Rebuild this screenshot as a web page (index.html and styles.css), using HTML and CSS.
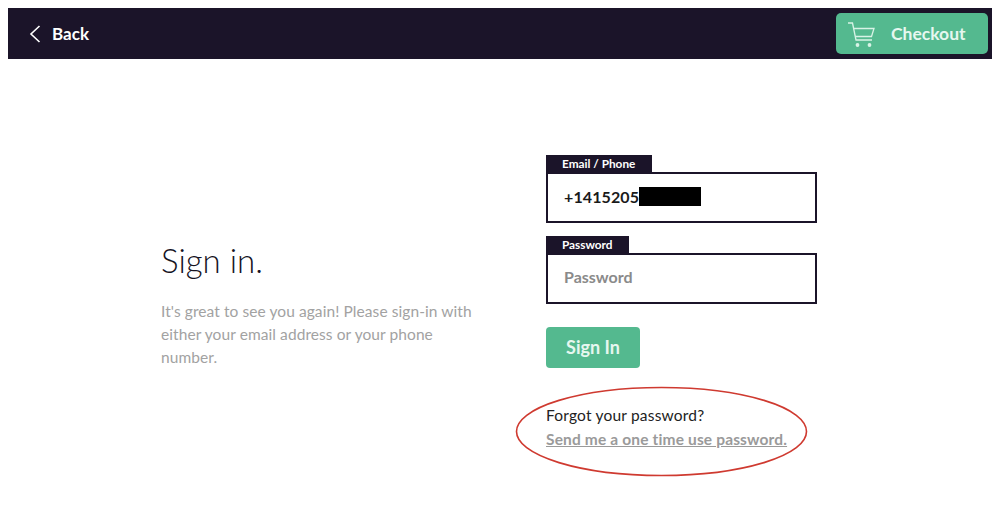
FILE: index.html
```html
<!DOCTYPE html>
<html lang="en">
<head>
  <meta charset="UTF-8" />
  <title>Sign in</title>
  <link rel="stylesheet" href="styles.css">
</head>
<body>
  <div class="page">
    <div class="header">
      <a class="back-link">
        <svg class="back-icon" width="12" height="18" viewBox="0 0 12 18">
          <path d="M10.5 1 L2 9 L10.5 17" fill="none" stroke="#fff" stroke-width="1.6"/>
        </svg>
        Back
      </a>
      <a class="checkout-btn">
        <svg class="cart-icon" width="28" height="28" viewBox="0 0 28 28">
          <path d="M1 3 H5.5 L9 20 H25" fill="none" stroke="#d8f3e6" stroke-width="1.3"/>
          <path d="M6.5 8.5 H27 L24.5 16.5 H8.2" fill="none" stroke="#d8f3e6" stroke-width="1.3"/>
          <circle cx="10.5" cy="25" r="1.9" fill="#d8f3e6"/>
          <circle cx="22.5" cy="25" r="1.9" fill="#d8f3e6"/>
        </svg>
        Checkout
      </a>
    </div>

    <div class="content">
      <div class="intro">
        <h1>Sign in.</h1>
        <p>It's great to see you again! Please sign-in with either your email address or your phone number.</p>
      </div>

      <div class="signin-form">
        <div class="form-group">
          <div class="field-tab tab-email">Email / Phone</div>
          <div class="field-box"><span class="field-value">+1415205</span><span class="redacted"></span></div>
        </div>
        <div class="form-group">
          <div class="field-tab tab-password">Password</div>
          <div class="field-box"><span class="field-placeholder">Password</span></div>
        </div>
        <button class="signin-btn">Sign In</button>
        <div class="forgot">
          <p>Forgot your password?</p>
          <a class="otp-link">Send me a one time use password.</a>
          <svg class="annotation" width="295" height="93" viewBox="0 0 295 93">
            <ellipse cx="146.5" cy="46.5" rx="145" ry="44" fill="none" stroke="#cf3a30" stroke-width="1.6"/>
          </svg>
        </div>
      </div>
    </div>
  </div>
</body>
</html>
```

FILE: styles.css
```css
body {
  margin: 8px;
  background: #fff;
  font-family: 'Lato', sans-serif;
  color: #1a1a1a;
}

.page {
  width: 984px;
}

.header {
  display: flex;
  justify-content: space-between;
  align-items: center;
  height: 51px;
  padding: 0 4px 0 21px;
  box-sizing: border-box;
  background: #1b1429;
}

.back-link {
  display: flex;
  align-items: center;
  gap: 11px;
  color: #fff;
  font-size: 17px;
  font-weight: 700;
}

.checkout-btn {
  display: flex;
  align-items: center;
  gap: 16px;
  width: 152px;
  height: 41px;
  padding-left: 11px;
  box-sizing: border-box;
  background: #54b98f;
  border-radius: 5px;
  color: #e6f7ef;
  font-size: 17.5px;
  font-weight: 700;
}

.content {
  display: flex;
  padding: 96px 0 0 153px;
}

.intro {
  width: 385px;
  padding-top: 84px;
  box-sizing: border-box;
}

.intro h1 {
  margin: 0 0 19px;
  font-size: 33px;
  font-weight: 300;
  line-height: 42px;
  color: #16131f;
}

.intro p {
  width: 320px;
  margin: 0;
  font-size: 15.5px;
  line-height: 23px;
  color: #a2a2a2;
  letter-spacing: 0.08px;
}

.signin-form {
  width: 271px;
}

.form-group {
  margin-bottom: 13px;
}

.field-tab {
  height: 17px;
  padding-left: 16px;
  box-sizing: border-box;
  background: #1b1429;
  color: #fff;
  font-size: 11.8px;
  font-weight: 700;
  line-height: 17px;
}

.tab-email {
  width: 106px;
}

.tab-password {
  width: 83px;
}

.field-box {
  display: flex;
  align-items: center;
  height: 51px;
  padding: 0 0 2px 16px;
  box-sizing: border-box;
  border: 2px solid #1b1429;
}

.field-value {
  font-size: 16px;
  font-weight: 700;
  color: #1a1a1a;
  letter-spacing: 0.1px;
}

.redacted {
  width: 62px;
  height: 19px;
  background: #000;
}

.field-placeholder {
  padding-bottom: 2px;
  font-size: 16px;
  font-weight: 700;
  color: #8a8a8a;
}

.signin-btn {
  display: block;
  width: 94px;
  height: 41px;
  margin-top: 23px;
  padding: 0 0 2px;
  background: #54b98f;
  border: none;
  border-radius: 4px;
  color: #e6f7ef;
  font-family: 'Lato', sans-serif;
  font-size: 18px;
  font-weight: 700;
}

.forgot {
  position: relative;
  margin-top: 38px;
  padding-bottom: 40px;
  font-size: 15.5px;
}

.forgot p {
  margin: 0 0 5px;
  line-height: 19px;
  color: #222;
  letter-spacing: 0.2px;
}

.otp-link {
  display: block;
  width: 260px;
  white-space: nowrap;
  line-height: 19px;
  font-weight: 700;
  color: #9a9a9a;
  text-decoration: underline;
  letter-spacing: 0.15px;
}

.annotation {
  position: absolute;
  left: -31px;
  top: -21px;
}
```
